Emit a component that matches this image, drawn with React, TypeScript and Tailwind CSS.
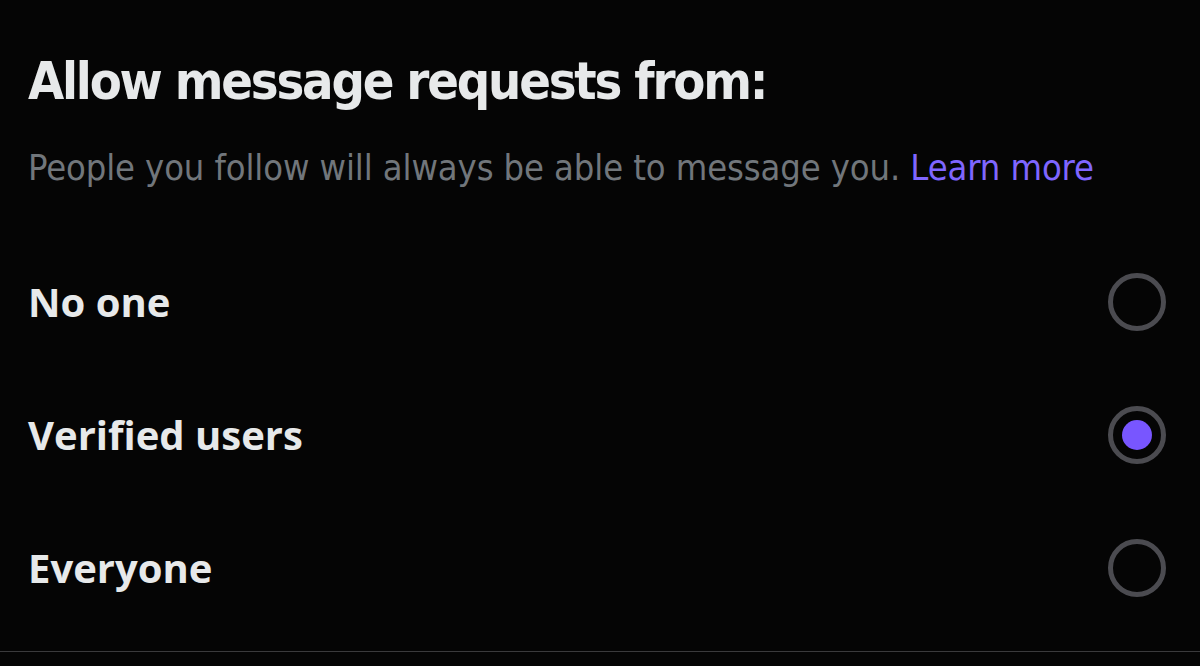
import React from "react";

const options = [
  { label: "No one", selected: false },
  { label: "Verified users", selected: true },
  { label: "Everyone", selected: false },
];

export default function App() {
  return (
    <div className="w-[1200px] h-[666px] bg-[#050505] flex flex-col overflow-hidden">
      <div className="pl-[28px] pt-[51px]">
        <h1
          className="text-[52px] leading-[60px] font-bold text-[#e7e9ea] tracking-[-2.2px]"
          style={{ fontFamily: '"DejaVu Sans Condensed", "Liberation Sans Narrow", sans-serif' }}
        >
          Allow message requests from:
        </h1>
        <p
          className="mt-[32px] text-[36px] leading-[50px] text-[#71767b] tracking-[-0.1px]"
          style={{ fontFamily: '"DejaVu Sans Condensed", "Liberation Sans Narrow", sans-serif' }}
        >
          People you follow will always be able to message you.{" "}
          <span className="text-[#7f66ff]">Learn more</span>
        </p>
      </div>
      <div className="mt-[42px] flex flex-col">
        {options.map((o) => (
          <div key={o.label} className="h-[133px] flex items-center justify-between pl-[28px] pr-[34px]">
            <span
              className="text-[40px] font-bold text-[#e7e9ea]"
              style={{ fontFamily: '"Open Sans", sans-serif' }}
            >
              {o.label}
            </span>
            <div className="w-[58px] h-[58px] rounded-full border-[5px] border-[#4b4b50] flex items-center justify-center">
              {o.selected && <div className="w-[30px] h-[30px] rounded-full bg-[#7856ff]" />}
            </div>
          </div>
        ))}
      </div>
      <div className="mt-[17px] h-px bg-[#3a3a3c]" />
    </div>
  );
}
